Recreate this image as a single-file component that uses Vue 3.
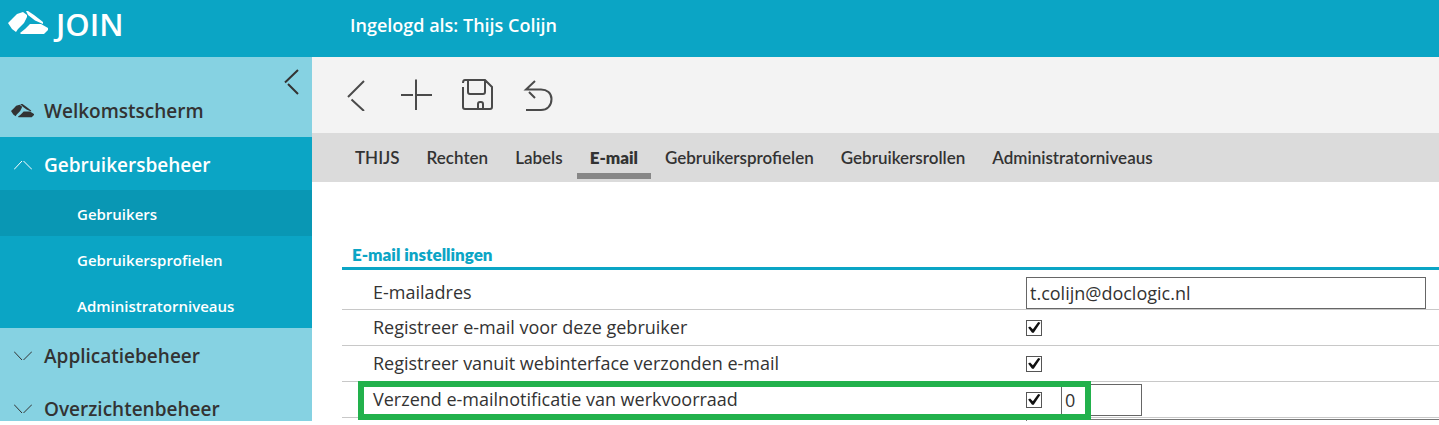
<template>
  <div class="app">
    <header class="topbar">
      <a class="brand" href="#">
        <svg class="brand-mark" viewBox="0 0 40 24" aria-hidden="true">
          <path d="M0 12 L5 7 L9 3 L15 1 L19 4 L19 6 L16 12 L10 18 L8 21 L4 18Z M18 0 H20 L26 4 L35 11 V13 L27 9.5 L20 4Z M12 22 L17 18 L22 13 H33 L40 17 V19 L36 23 H13Z" />
        </svg>
        <span>JOIN</span>
      </a>
      <div class="login">Ingelogd als: Thijs Colijn</div>
    </header>

    <div class="body">
      <nav class="sidebar">
        <button class="collapse" type="button" aria-label="Menu inklappen">
          <svg viewBox="0 0 16 26"><path d="M14 1 L1 13.5 M4 15 L14 25" /></svg>
        </button>
        <a class="nav-item home" href="#">
          <svg class="home-mark" viewBox="0 0 40 24" aria-hidden="true">
            <path d="M0 12 L5 7 L9 3 L15 1 L19 4 L19 6 L16 12 L10 18 L8 21 L4 18Z M16 0 H20 L26 4 L35 11 V13 L27 9.5 L20 4Z M12 22 L17 18 L22 13 H33 L40 17 V19 L36 23 H13Z" />
          </svg>
          <span>Welkomstscherm</span>
        </a>
        <div v-for="group in groups" :key="group.name" :class="{ open: group.items.length }">
          <button class="nav-item" type="button" :aria-expanded="group.items.length > 0">
            <svg class="chevron" viewBox="0 0 18 10" aria-hidden="true">
              <path :d="group.items.length ? 'M0 9.5 L8 1 M9.5 1 L18 9.5' : 'M0 0.5 L8 9 M9.5 9 L18 0.5'" />
            </svg>
            <span>{{ group.name }}</span>
          </button>
          <a
            v-for="item in group.items"
            :key="item"
            class="sub-item"
            :class="{ active: item === 'Gebruikers' }"
            href="#"
          >{{ item }}</a>
        </div>
      </nav>

      <main class="content">
        <div class="toolbar">
          <button type="button" aria-label="Terug">
            <svg viewBox="0 0 32 32"><path d="M24 2 L8 18 M11.5 20.5 L24 32" /></svg>
          </button>
          <button type="button" aria-label="Nieuw">
            <svg viewBox="0 0 32 32"><path d="M15 0.5 V31 M0 16 H12 M15 16 H31" /></svg>
          </button>
          <button type="button" aria-label="Opslaan">
            <svg viewBox="0 0 32 32">
              <path d="M1 4 Q1 1 3 1 H23 L30 8 V28 Q30 30 28 30 H3 Q1 30 1 28 V8 M6 1 V13 Q6 15 8 15 H21 Q23 15 23 13 V1 M16 30 V25 Q16 23 18 23 H19 Q21 23 21 25 V30" />
            </svg>
          </button>
          <button type="button" aria-label="Ongedaan maken">
            <svg viewBox="0 0 32 32"><path d="M12 2 L3 10.5 H18 C24 10.5 28.5 14 28.5 20 C28.5 27 24 31 18 31 H3 M6 13 L12 19" /></svg>
          </button>
        </div>

        <div class="tabs" role="tablist">
          <button
            v-for="tab in tabs"
            :key="tab"
            class="tab"
            :class="{ active: tab === activeTab }"
            type="button"
            role="tab"
            :aria-selected="tab === activeTab"
            @click="activeTab = tab"
          >{{ tab }}</button>
        </div>

        <form class="settings">
          <h2>E-mail instellingen</h2>
          <div class="row first">
            <label for="email">E-mailadres</label>
            <div class="field"><input id="email" v-model="email" class="text" type="text" /></div>
          </div>
          <div class="row">
            <label for="register">Registreer e-mail voor deze gebruiker</label>
            <div class="field"><input id="register" v-model="register" type="checkbox" /></div>
          </div>
          <div class="row">
            <label for="web">Registreer vanuit webinterface verzonden e-mail</label>
            <div class="field"><input id="web" v-model="web" type="checkbox" /></div>
          </div>
          <div class="row marked">
            <label for="notify">Verzend e-mailnotificatie van werkvoorraad</label>
            <div class="field">
              <input id="notify" v-model="notify" type="checkbox" />
              <input v-model="count" class="text count" type="text" aria-label="Aantal" />
            </div>
          </div>
          <div class="row">
            <span></span>
            <div class="field"><textarea aria-label="Opmerking"></textarea></div>
          </div>
        </form>
      </main>
    </div>
  </div>
</template>

<script setup>
import { ref } from 'vue'

const groups = [
  { name: 'Gebruikersbeheer', items: ['Gebruikers', 'Gebruikersprofielen', 'Administratorniveaus'] },
  { name: 'Applicatiebeheer', items: [] },
  { name: 'Overzichtenbeheer', items: [] }
]

const tabs = ['THIJS', 'Rechten', 'Labels', 'E-mail', 'Gebruikersprofielen', 'Gebruikersrollen', 'Administratorniveaus']
const activeTab = ref('E-mail')

const email = ref('t.colijn@doclogic.nl')
const register = ref(true)
const web = ref(true)
const notify = ref(true)
const count = ref('0')
</script>

<style>
body {
  margin: 0;
  background: #fff;
}
</style>

<style scoped>
* {
  box-sizing: border-box;
}

.app {
  display: flex;
  flex-direction: column;
  height: 100vh;
  padding-bottom: 4px;
  overflow: hidden;
  font-family: "Open Sans", "Noto Sans", sans-serif;
  color: #333;
}

button {
  border: 0;
  padding: 0;
  background: none;
  color: inherit;
  font: inherit;
  cursor: pointer;
}

a {
  color: inherit;
  text-decoration: none;
}

svg {
  display: block;
  fill: none;
  stroke: currentColor;
}

.topbar {
  display: flex;
  flex: none;
  height: 57px;
  background: #0ba5c5;
  color: #fff;
}

.brand {
  display: flex;
  align-items: flex-start;
  gap: 8px;
  width: 350px;
  padding: 4px 8px;
  font-size: 31px;
  font-weight: 600;
  line-height: 40px;
}

.brand-mark {
  width: 40px;
  height: 24px;
  margin-top: 7px;
  fill: currentColor;
  stroke: none;
}

.login {
  font-size: 18px;
  font-weight: 600;
  line-height: 50px;
}

.body {
  display: flex;
  flex: 1;
  min-height: 0;
}

.sidebar {
  position: relative;
  flex: none;
  width: 312px;
  overflow: hidden;
  background: #86d2e2;
}

.collapse {
  position: absolute;
  top: 12px;
  right: 12px;
}

.collapse svg {
  width: 16px;
  height: 26px;
  stroke-width: 2;
}

.nav-item {
  display: flex;
  align-items: center;
  gap: 12px;
  width: 100%;
  height: 53px;
  padding: 2px 14px 0;
  font-size: 19px;
  font-weight: 600;
  line-height: 24px;
}

.home {
  gap: 10px;
  height: 80px;
  padding: 28px 11px 0;
}

.home-mark {
  width: 23px;
  height: 14px;
  fill: currentColor;
  stroke: none;
}

.chevron {
  width: 18px;
  height: 10px;
}

.open {
  background: #0ba5c5;
  color: #fff;
}

.sub-item {
  display: block;
  height: 46px;
  padding-left: 77px;
  font-size: 15px;
  font-weight: 600;
  line-height: 48px;
}

.sub-item.active {
  background: #0997b4;
}

.content {
  flex: 1;
  min-width: 0;
  overflow: hidden;
}

.toolbar {
  display: flex;
  align-items: center;
  gap: 29px;
  height: 76px;
  padding: 0 28px;
  background: #f3f3f3;
  color: #4a4a4a;
}

.toolbar svg {
  width: 32px;
  height: 32px;
  stroke-width: 2;
}

.tabs {
  display: flex;
  gap: 1px;
  height: 49px;
  padding: 0 30px;
  background: #dbdbdb;
  font-family: Lato, sans-serif;
  font-size: 17px;
  font-weight: 600;
}

.tab {
  height: 46px;
  padding: 10px 13px 0;
  border-bottom: 6px solid transparent;
  line-height: 30px;
  white-space: nowrap;
}

.tab.active {
  border-bottom-color: #878787;
  font-weight: 800;
}

.settings {
  padding: 61px 0 0 30px;
  font-size: 18px;
}

h2 {
  margin: 0;
  padding: 2px 0 2px 10px;
  border-bottom: 3px solid #0ba5c5;
  color: #0ba5c5;
  font-family: Lato, sans-serif;
  font-size: 17px;
  font-weight: 800;
  line-height: 20px;
}

.row {
  position: relative;
  display: grid;
  grid-template-columns: 1fr 413px;
  align-items: center;
  height: 36px;
  border-bottom: 1px solid #c8c8c8;
}

.row.first {
  height: 40px;
  padding-top: 6px;
}

.row label {
  padding: 0 0 2px 31px;
}

.field {
  display: flex;
  align-items: center;
}

.text {
  width: 400px;
  height: 32px;
  border: 1px solid #666;
  padding: 0 3px;
  background: #fff;
  color: #333;
  font: inherit;
}

.count {
  width: 81px;
  margin-left: 19px;
}

input[type="checkbox"] {
  appearance: none;
  width: 16px;
  height: 16px;
  margin: 0;
  border: 1px solid #555;
  background: #fff;
}

input[type="checkbox"]:checked::after {
  content: "";
  display: block;
  width: 14px;
  height: 14px;
  background: #111;
  clip-path: polygon(8% 50%, 22% 42%, 42% 62%, 80% 10%, 96% 16%, 48% 88%, 36% 88%);
}

.marked {
  z-index: 1;
}

.marked::after {
  content: "";
  position: absolute;
  top: -1px;
  right: 348px;
  bottom: -3px;
  left: 16px;
  border: 6px solid #22b14c;
  pointer-events: none;
}

textarea {
  flex: none;
  width: 100%;
  height: 34px;
  border: 1px solid #777;
  border-right: 0;
  resize: none;
}
</style>
